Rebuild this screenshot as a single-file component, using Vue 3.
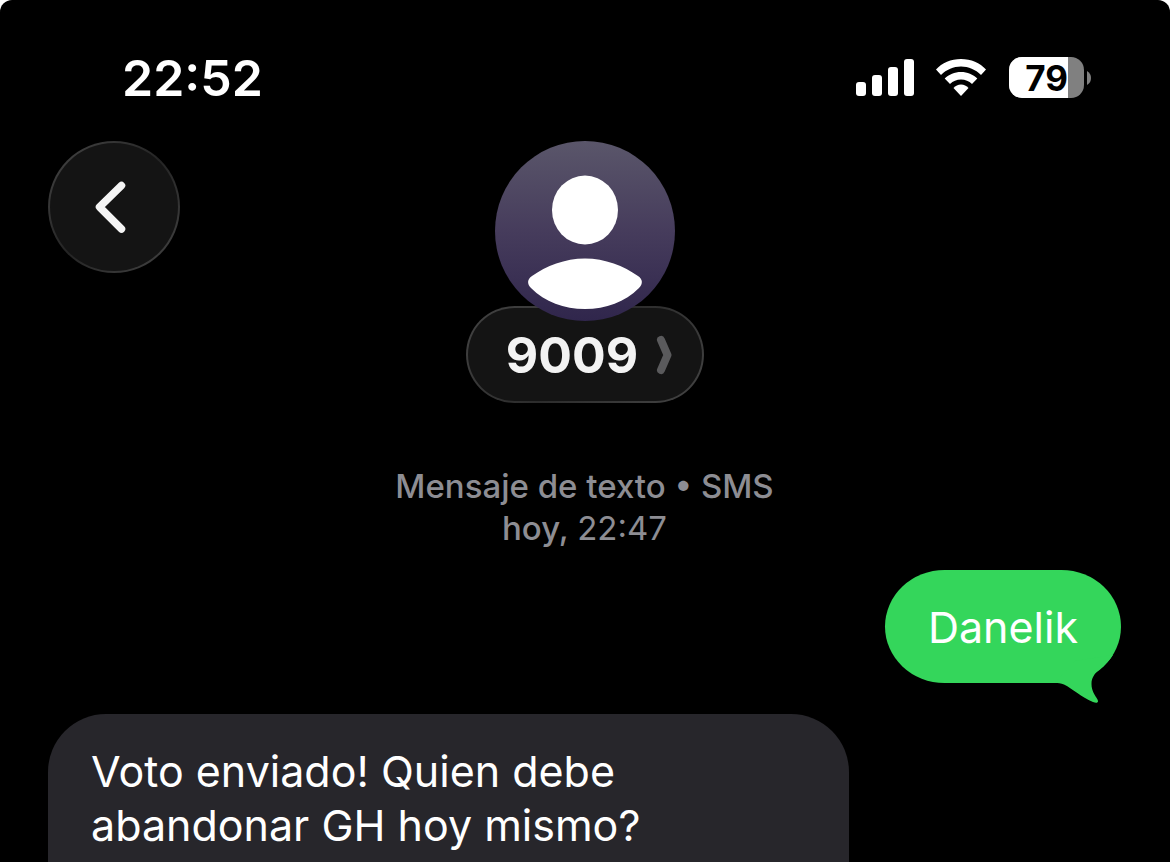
<template>
  <div class="phone">
    <!-- Status bar -->
    <div class="status-bar">
      <time class="status-time">{{ clock }}</time>
      <div class="status-icons">
        <svg class="icon-signal" width="58" height="38" viewBox="0 0 58 38" fill="currentColor" aria-hidden="true">
          <rect
            v-for="bar in signalBars"
            :key="bar.x"
            :x="bar.x"
            :y="37 - bar.height"
            width="10"
            :height="bar.height"
            rx="3"
          />
        </svg>
        <svg class="icon-wifi" width="52" height="38" viewBox="0 0 52 38" fill="currentColor" aria-hidden="true">
          <path d="M26 0C36 0 45 4 51 10.500L46 16C40.500 10.500 33.500 7.500 26 7.500C18.500 7.500 11.500 10.500 6 16L1 10.500C7 4 16 0 26 0Z" />
          <path d="M26 13C32.500 13 38 15.500 42.300 19.500L37 25C34 22 30.300 20.500 26 20.500C21.700 20.500 18 22 15 25L9.700 19.500C14 15.500 19.500 13 26 13Z" />
          <path d="M26 25.500C29 25.500 31.500 26.700 33.500 29L26 37L18.500 29C20.500 26.700 23 25.500 26 25.500Z" />
        </svg>
        <div class="battery">
          <div class="battery-body">
            <div class="battery-fill" :style="{ width: `${battery}%` }"></div>
            <span class="battery-text">{{ battery }}</span>
          </div>
          <svg class="battery-cap" width="5" height="14" viewBox="0 0 5 14" aria-hidden="true">
            <path d="M0 0C3 2 4 4 4 7S3 12 0 14Z" fill="#808080" />
          </svg>
        </div>
      </div>
    </div>

    <!-- Conversation header -->
    <header class="chat-header">
      <button type="button" class="back-button" aria-label="Atrás">
        <svg width="34" height="54" viewBox="0 0 34 54" fill="none" aria-hidden="true">
          <path d="M29.500 5.500L7.500 27L29.500 49" stroke="#f4f4f4" stroke-width="7.500" stroke-linecap="round" stroke-linejoin="round" />
        </svg>
      </button>
      <div class="contact">
        <svg class="avatar" width="180" height="180" viewBox="0 0 180 180" aria-hidden="true">
          <defs>
            <linearGradient id="avatar-bg" x1="0" y1="0" x2="0" y2="1">
              <stop offset="0" stop-color="#5a566a" />
              <stop offset="0.5" stop-color="#463c5c" />
              <stop offset="1" stop-color="#30264c" />
            </linearGradient>
          </defs>
          <circle cx="90" cy="90" r="90" fill="url(#avatar-bg)" />
          <ellipse cx="90" cy="69" rx="33" ry="34.500" fill="#fff" />
          <path d="M90 117.500C110 117.500 129 125 143 135C148 138.500 148 143 144 147C130 161 111 168 90 168C69 168 50 161 36 147C32 143 32 138.500 37 135C51 125 70 117.500 90 117.500Z" fill="#fff" />
        </svg>
        <button type="button" class="contact-name">
          <span>{{ contact }}</span>
          <svg width="16" height="40" viewBox="0 0 16 40" fill="none" aria-hidden="true">
            <path d="M5 5L11.500 20L5 35" stroke="#5a5a5c" stroke-width="8" stroke-linecap="round" stroke-linejoin="round" />
          </svg>
        </button>
      </div>
    </header>

    <!-- Messages -->
    <main class="thread">
      <p class="thread-info">
        Mensaje de texto • SMS<br />
        <span>hoy,</span> <span class="thread-hour">22:47</span>
      </p>
      <div
        v-for="message in messages"
        :key="message.id"
        class="bubble"
        :class="message.sent ? 'bubble-sent' : 'bubble-received'"
      >
        {{ message.text }}
        <svg v-if="message.sent" class="bubble-tail" width="66" height="50" viewBox="0 0 66 50" aria-hidden="true">
          <path d="M0 29.500L20 8L58 2C54 8 50 12 45 16C39 21 36.500 25 36.500 31C36.500 38 40 42 42.500 46.500C44 49.500 42 50.500 38 49C26 44 18 36 9 31.500C6 30 3 30 0 30Z" fill="#34d65b" />
        </svg>
      </div>
    </main>
  </div>
</template>

<script setup>
import { ref } from 'vue'

const clock = ref('22:52')
const battery = ref(79)
const contact = ref('9009')

const signalBars = [
  { x: 0, height: 14 },
  { x: 16, height: 21 },
  { x: 32, height: 29 },
  { x: 48, height: 37 }
]

const messages = ref([
  { id: 1, sent: true, text: 'Danelik' },
  { id: 2, sent: false, text: 'Voto enviado! Quien debe abandonar GH hoy mismo?' }
])
</script>

<style>
body {
  margin: 0;
  background: #fff;
}
</style>

<style scoped>
.phone {
  height: 100vh;
  overflow: hidden;
  border-radius: 12px 12px 0 0;
  background: #000;
  color: #fff;
  font-family: Inter, 'Liberation Sans', sans-serif;
}

/* Status bar */
.status-bar {
  display: flex;
  align-items: center;
  justify-content: space-between;
  padding: 48px 78px 33px 122px;
}

.status-time {
  font-size: 50px;
  line-height: 60px;
  font-weight: 600;
}

.status-icons {
  display: flex;
  align-items: center;
}

.icon-signal {
  margin-right: 21px;
}

.icon-wifi {
  margin-right: 22px;
}

.battery {
  display: flex;
  align-items: center;
  gap: 3px;
  padding-bottom: 1px;
}

.battery-body {
  position: relative;
  width: 75px;
  height: 41px;
  border-radius: 13px;
  background: #808080;
  overflow: hidden;
}

.battery-fill {
  height: 100%;
  background: #fff;
}

.battery-text {
  position: absolute;
  inset: 0;
  color: #000;
  font-size: 35px;
  line-height: 42px;
  font-weight: 700;
  text-align: center;
}

/* Header */
.chat-header {
  display: grid;
  grid-template-columns: 1fr auto 1fr;
  align-items: start;
  padding: 0 48px;
}

.back-button {
  display: flex;
  align-items: center;
  justify-content: center;
  width: 132px;
  height: 132px;
  padding: 0 10px 0 0;
  border: 2px solid transparent;
  border-radius: 50%;
  background:
    linear-gradient(#141414, #141414) padding-box,
    linear-gradient(135deg, #464646 0%, #242424 50%, #464646 100%) border-box;
}

.contact {
  display: flex;
  flex-direction: column;
  align-items: center;
}

.avatar {
  position: relative;
  z-index: 1;
}

.contact-name {
  display: flex;
  align-items: center;
  gap: 18px;
  height: 97px;
  margin-top: -15px;
  padding: 0 30px 0 38px;
  border: 2px solid transparent;
  border-radius: 50px;
  background:
    linear-gradient(#141414, #141414) padding-box,
    linear-gradient(135deg, #444 0%, #2c2c2c 50%, #444 100%) border-box;
  color: #f2f2f2;
  font-family: inherit;
  font-size: 50px;
  line-height: 60px;
  font-weight: 700;
}

/* Thread */
.thread {
  display: flex;
  flex-direction: column;
  padding: 62px 49px 0 48px;
}

.thread-info {
  margin: 0 0 21px;
  color: #8d8d93;
  font-size: 33px;
  line-height: 42px;
  font-weight: 500;
  text-align: center;
}

.thread-hour {
  font-weight: 400;
}

.bubble {
  position: relative;
  box-sizing: border-box;
  font-size: 43px;
  line-height: 54px;
}

.bubble-sent {
  align-self: flex-end;
  padding: 30px 43px 29px;
  border-radius: 60px / 57px;
  background: #34d65b;
}

.bubble-tail {
  position: absolute;
  right: 0;
  bottom: -20px;
}

.bubble-received {
  width: calc(75% - 4px);
  margin-top: 31px;
  padding: 30px 43px 85px;
  border-radius: 58px;
  background: #27262b;
}
</style>
